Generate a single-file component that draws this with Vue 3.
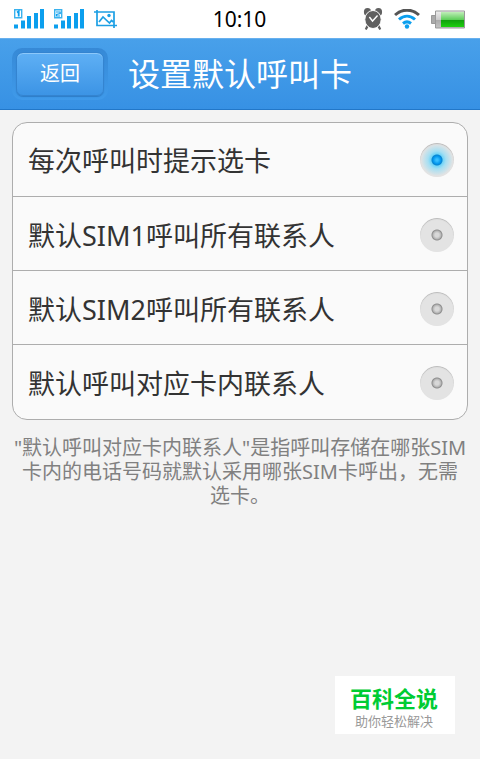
<script setup>
import { ref } from 'vue'

const choice = ref(0)
const options = [
  '每次呼叫时提示选卡',
  '默认SIM1呼叫所有联系人',
  '默认SIM2呼叫所有联系人',
  '默认呼叫对应卡内联系人',
]
</script>

<template>
  <div class="screen">
    <div class="status">
      <div class="group left">
        <svg width="30" height="20" viewBox="0 0 30 20" aria-hidden="true">
          <path d="M.7 .7h7v8h-7z" fill="#fff" stroke="#3ab2ee" stroke-width="1.400" />
          <path d="M3 3.500l1.700-1.200v5.200" fill="none" stroke="#0c9fee" stroke-width="1.800" />
          <path d="M0 15.500h4v4H0zM7 11.500h4v8H7zM13 7h4v12.500h-4zM20 4h4v15.500h-4zM26 0h4v19.500h-4z" fill="#0c9fee" />
        </svg>
        <svg width="30" height="20" viewBox="0 0 30 20" aria-hidden="true">
          <path d="M.7 .7h7v8h-7z" fill="#fff" stroke="#3ab2ee" stroke-width="1.400" />
          <path d="M2 3h4.200v1.500L2.500 5.500V7H6" fill="none" stroke="#0c9fee" stroke-width="1.200" />
          <path d="M0 15.500h4v4H0zM7 11.500h4v8H7zM13 7h4v12.500h-4zM20 4h4v15.500h-4zM26 0h4v19.500h-4z" fill="#0c9fee" />
        </svg>
        <svg width="24" height="20" viewBox="0 0 24 20" aria-hidden="true">
          <g fill="none" stroke="#1c9fe4" stroke-width="1.700">
            <path d="M0 3h20v16M3 1v15.500h20" />
            <path d="M5 13l4-5 6.500 6 2-2.500 2 1.500" />
          </g>
          <circle cx="15" cy="6.500" r="1.700" fill="#1c9fe4" />
        </svg>
      </div>
      <time>10:10</time>
      <div class="group right">
        <svg width="20" height="22" viewBox="0 0 22 22" preserveAspectRatio="none" aria-hidden="true">
          <g fill="#606060">
            <circle cx="5" cy="4" r="4" />
            <circle cx="17" cy="4" r="4" />
            <path d="M4 17l2 2-2 3-2-1zM18 17l-2 2 2 3 2-1z" />
          </g>
          <circle cx="11" cy="11.500" r="9" fill="#606060" stroke="#fff" />
          <path d="M7 9l3.500 4L16 7.500" fill="none" stroke="#fff" stroke-width="1.600" />
        </svg>
        <svg width="26" height="20" viewBox="0 0 26 20" aria-hidden="true">
          <g fill="none" stroke-width="3">
            <path d="M1 6C8-.5 18-.5 25 6" stroke="#555" />
            <path d="M5 10.500c5-4.500 11-4.500 16 0" stroke="#0c9fee" />
            <path d="M9 14.500c2.500-2 5.500-2 8 0" stroke="#0c9fee" />
          </g>
          <circle cx="13" cy="17.500" r="2.200" fill="#0c9fee" />
        </svg>
        <svg width="34" height="19" viewBox="0 0 34 19" aria-hidden="true">
          <defs>
            <linearGradient id="cell" x2="0" y2="1">
              <stop offset="0" stop-color="#c0edb9" />
              <stop offset=".5" stop-color="#60cf5c" />
              <stop offset=".55" stop-color="#12a00e" />
              <stop offset="1" stop-color="#1cd00e" />
            </linearGradient>
            <linearGradient id="shell" x2="0" y2="1">
              <stop offset="0" stop-color="#eee" />
              <stop offset=".5" stop-color="#ccc" />
              <stop offset=".55" stop-color="#aaa" />
              <stop offset="1" stop-color="#c4c4c4" />
            </linearGradient>
          </defs>
          <path d="M.5 5.500h4v8h-4z" fill="#aaa" stroke="#999" />
          <path d="M4.500 1h29v17h-29z" fill="url(#shell)" stroke="#999" />
          <path d="M10 2h23v15H10z" fill="url(#cell)" />
        </svg>
      </div>
    </div>

    <header class="bar">
      <div class="well"><button type="button" class="back">返回</button></div>
      <h1>设置默认呼叫卡</h1>
    </header>

    <main>
      <div class="list" role="radiogroup" aria-label="设置默认呼叫卡">
        <label v-for="(text, i) in options" :key="text" class="row">
          <span>{{ text }}</span>
          <input v-model="choice" type="radio" name="card" :value="i" />
        </label>
      </div>
      <p class="note">"默认呼叫对应卡内联系人"是指呼叫存储在哪张SIM卡内的电话号码就默认采用哪张SIM卡呼出，无需选卡。</p>
    </main>

    <aside class="brand">
      <strong>百科全说</strong>
      <small>助你轻松解决</small>
    </aside>
  </div>
</template>

<style>
body {
  background: #f3f3f3;
}
</style>

<style scoped>
.screen {
  display: flex;
  flex-direction: column;
  min-height: 100vh;
  box-sizing: border-box;
  padding-bottom: 25px;
  background: #f3f3f3;
  font-family: "Noto Sans", "Noto Sans CJK SC", sans-serif;
}
.status {
  display: grid;
  grid-template-columns: 1fr auto 1fr;
  align-items: center;
  height: 38px;
  padding: 0 15px 0 14px;
  background: #fff;
}
.group {
  display: flex;
  align-items: center;
  gap: 10px;
}
.right {
  justify-content: flex-end;
  gap: 11px;
}
time {
  font-size: 21px;
  line-height: 38px;
  color: #000;
}
.bar {
  display: flex;
  align-items: center;
  gap: 20px;
  height: 72px;
  box-sizing: border-box;
  padding: 0 12px;
  border-top: 1px solid #67b0ee;
  border-bottom: 1px solid #2277c8;
  background: linear-gradient(#48a0ea, #3791e4);
}
.well {
  padding: 4px;
  border-radius: 10px;
  background: linear-gradient(#3689d6, #3f9aea);
}
.back {
  display: block;
  width: 88px;
  height: 44px;
  padding: 0;
  border: 1px solid #3484d0;
  border-radius: 7px;
  background: linear-gradient(#5fb0f5, #3c94e5);
  box-shadow: inset 0 1px 0 #8cc8fa, 0 1px 1px #2d7dc8;
  color: #fff;
  font-family: inherit;
  font-size: 20px;
  line-height: 42px;
}
h1 {
  margin: 0;
  color: #fff;
  font-size: 32px;
  font-weight: 400;
  line-height: 48px;
}
main {
  padding: 12px;
}
.list {
  padding-bottom: 1px;
  border: 1px solid #adadad;
  border-radius: 15px;
  background: #fafafa;
}
.row {
  display: flex;
  align-items: center;
  justify-content: space-between;
  height: 73px;
  padding: 0 13px 0 15px;
  color: #333;
  font-size: 27px;
}
.row + .row {
  height: 71px;
  padding-top: 2px;
  border-top: 1px solid #adadad;
}
.row input {
  appearance: none;
  width: 34px;
  height: 34px;
  margin: 0;
  border-radius: 50%;
  background:
    radial-gradient(circle, #d8d8d8 0 2px, #b5b5b5 4px, #8d8d8d 5px, transparent 6px),
    #e3e3e3;
  box-shadow: inset 0 1px 1px #b8b8b8;
}
.row input:checked {
  background:
    radial-gradient(circle, #37bfff 0 1px, #0094ec 4px, #0b84cf 5px, transparent 6px),
    radial-gradient(circle, #5fd0f8 5px, #a5dff3 9px, #e3e3e3 16px);
}
.note {
  margin: 16px 1px 0;
  color: #808080;
  font-size: 20px;
  line-height: 24px;
  text-align: center;
}
.brand {
  display: flex;
  flex-direction: column;
  align-items: center;
  align-self: flex-end;
  box-sizing: border-box;
  width: 120px;
  height: 58px;
  margin: auto 25px 0 0;
  padding: 7px 2px 0 0;
  background: #fff;
}
.brand strong {
  color: #0c3;
  font-size: 22px;
  font-weight: 700;
  line-height: 30px;
}
.brand small {
  color: #999;
  font-size: 13px;
  line-height: 16px;
}
</style>
